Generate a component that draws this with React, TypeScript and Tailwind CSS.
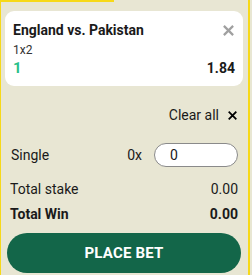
import React from "react";

function CloseIcon({className}: {className?: string}) {
    return (
        <svg viewBox="0 0 10 10" className={className} fill="none" stroke="currentColor" strokeWidth={2} strokeLinecap="square">
            <path d="M1.5 1.5 L8.5 8.5 M8.5 1.5 L1.5 8.5"/>
        </svg>
    );
}

export default function App() {
    return (
        <div className="w-[252px] h-[275px] bg-[#e8e6d3] overflow-hidden font-['Roboto',sans-serif] text-[#1a1a1a]">
            <div className="w-[250px] h-full border-l border-r-2 border-[#f7d918] flex flex-col">
                <div className="h-[2px] w-[113px] bg-[#f7d918]"/>

                {/* bet slip card */}
                <div className="mt-[9px] ml-[4px] mr-[5px] bg-white rounded-[9px] pl-2 pr-2 pt-[9px] pb-[8px]">
                    <div className="flex items-center justify-between h-5">
                        <p className="font-bold text-[14px] leading-5">England vs. Pakistan</p>
                        <CloseIcon className="w-[11px] h-[11px] text-[#a0a0a0] mr-[1px]"/>
                    </div>
                    <p className="text-[12px] leading-4 text-[#333] mt-[2px]">1x2</p>
                    <div className="flex items-center justify-between h-5">
                        <span className="font-bold text-[15px] text-[#29bf8a]">1</span>
                        <span className="font-bold text-[14px]">1.84</span>
                    </div>
                </div>

                <div className="mt-[19px] mr-[11px] flex items-center justify-end gap-[9px] h-5">
                    <span className="text-[14px] leading-5">Clear all</span>
                    <CloseIcon className="w-[9px] h-[9px] text-black"/>
                </div>

                <div className="mt-[18px] ml-[10px] mr-[10px] flex items-center h-6">
                    <span className="text-[14px] grow">Single</span>
                    <span className="text-[14px] mr-3">0x</span>
                    <div className="w-[84px] h-6 rounded-full border border-[#8a8a8a] bg-white flex items-center pl-[15px] text-[14px]">0</div>
                </div>

                <div className="mt-[12px] ml-[9px] mr-[10px] flex justify-between text-[14px] leading-5">
                    <span>Total stake</span>
                    <span>0.00</span>
                </div>
                <div className="mt-[5px] ml-[9px] mr-[10px] flex justify-between text-[14px] leading-5 font-bold">
                    <span>Total Win</span>
                    <span>0.00</span>
                </div>

                <button className="mt-[9px] ml-[6px] mr-[7px] h-10 rounded-full bg-[#136649] text-white font-bold text-[15px] tracking-[0.2px]">
                    PLACE BET
                </button>
            </div>
        </div>
    );
}
